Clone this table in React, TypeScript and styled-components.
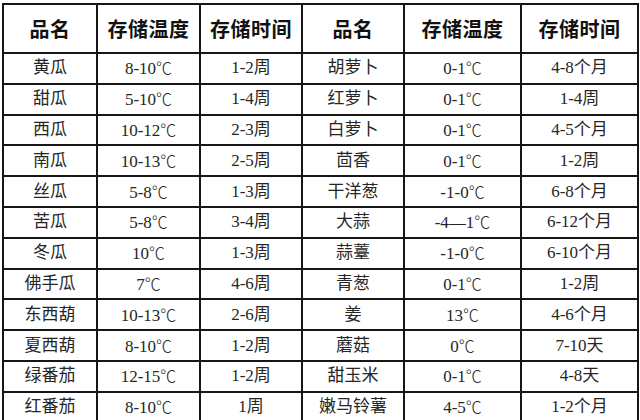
import React from "react";
import styled, { createGlobalStyle } from "styled-components";

const GlobalStyle = createGlobalStyle`
  html, body {
    margin: 0;
    padding: 0;
    background: #ffffff;
  }
  body {
    font-family: "Liberation Serif", "Noto Sans CJK SC", serif;
    overflow: hidden;
  }
`;

const Page = styled.div`
  width: 640px;
  height: 420px;
  padding: 3px 0 0 2px;
  box-sizing: border-box;
  overflow: hidden;
`;

const Table = styled.table`
  border-collapse: collapse;
  table-layout: fixed;
  width: 636px;
  color: #262626;
`;

const HeadCell = styled.th`
  height: 47px;
  border: 2px solid #161616;
  padding: 0;
  text-align: center;
  font-family: "Noto Sans CJK SC", sans-serif;
  font-size: 20px;
  font-weight: 700;
  color: #111111;
  letter-spacing: 0.5px;
`;

const Row = styled.tr`
  height: 30.8px;
`;

const Cell = styled.td`
  border: 2px solid #161616;
  padding: 0;
  text-align: center;
  font-size: 17px;
  line-height: 20px;
  font-weight: 400;
  white-space: nowrap;
`;

const Unit = styled.span`
  font-family: "Noto Sans CJK SC", sans-serif;
  font-weight: 300;
  font-size: 16px;
`;

const widths = [94, 103, 102, 102, 117, 117];

const headers = ["品名", "存储温度", "存储时间", "品名", "存储温度", "存储时间"];

const rows: string[][] = [
  ["黄瓜", "8-10℃", "1-2周", "胡萝卜", "0-1℃", "4-8个月"],
  ["甜瓜", "5-10℃", "1-4周", "红萝卜", "0-1℃", "1-4周"],
  ["西瓜", "10-12℃", "2-3周", "白萝卜", "0-1℃", "4-5个月"],
  ["南瓜", "10-13℃", "2-5周", "茴香", "0-1℃", "1-2周"],
  ["丝瓜", "5-8℃", "1-3周", "干洋葱", "-1-0℃", "6-8个月"],
  ["苦瓜", "5-8℃", "3-4周", "大蒜", "-4—1℃", "6-12个月"],
  ["冬瓜", "10℃", "1-3周", "蒜薹", "-1-0℃", "6-10个月"],
  ["佛手瓜", "7℃", "4-6周", "青葱", "0-1℃", "1-2周"],
  ["东西葫", "10-13℃", "2-6周", "姜", "13℃", "4-6个月"],
  ["夏西葫", "8-10℃", "1-2周", "蘑菇", "0℃", "7-10天"],
  ["绿番茄", "12-15℃", "1-2周", "甜玉米", "0-1℃", "4-8天"],
  ["红番茄", "8-10℃", "1周", "嫩马铃薯", "4-5℃", "1-2个月"],
];

const renderText = (text: string) => {
  if (!text.endsWith("℃")) return text;
  return (
    <>
      {text.slice(0, -1)}
      <Unit>℃</Unit>
    </>
  );
};

export default function App() {
  return (
    <>
      <GlobalStyle />
      <Page>
        <Table>
          <colgroup>
            {widths.map((w, i) => (
              <col key={i} style={{ width: w }} />
            ))}
          </colgroup>
          <thead>
            <tr>
              {headers.map((h, i) => (
                <HeadCell key={i}>{h}</HeadCell>
              ))}
            </tr>
          </thead>
          <tbody>
            {rows.map((r, i) => (
              <Row key={i}>
                {r.map((c, j) => (
                  <Cell key={j}>{renderText(c)}</Cell>
                ))}
              </Row>
            ))}
          </tbody>
        </Table>
      </Page>
    </>
  );
}
